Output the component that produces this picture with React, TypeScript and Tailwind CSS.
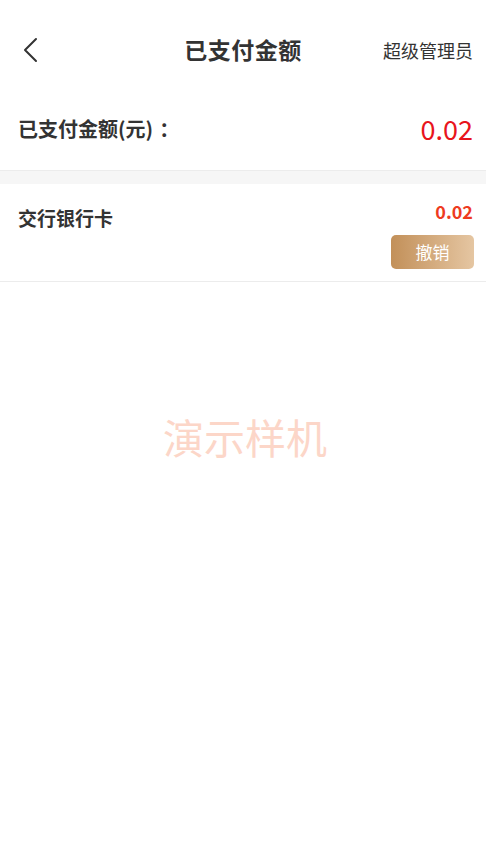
import React from "react";

const font = { fontFamily: '"Noto Sans CJK SC", "Noto Sans", sans-serif' };

export default function App() {
  return (
    <div className="min-h-[861px] w-[486px] bg-white text-[#333]" style={font}>
      {/* header */}
      <div className="relative flex h-[100px] items-start justify-center pt-[35px]">
        <button className="absolute left-[21px] top-[36px] p-0">
          <svg width="18" height="28" viewBox="0 0 18 28" fill="none">
            <path d="M15 3 L4 14 L15 25" stroke="#333" strokeWidth="2" strokeLinecap="round" strokeLinejoin="round" />
          </svg>
        </button>
        <h1 className="text-[23px] font-bold leading-[28px] tracking-[0.5px]">已支付金额</h1>
        <span className="absolute right-[13px] top-[37px] text-[18px] leading-[26px]">超级管理员</span>
      </div>

      {/* total */}
      <div className="flex h-[70px] items-start justify-between pl-[18px] pr-[13px] pt-[13px]">
        <span className="text-[20px] font-bold leading-[32px]">
          已支付金额(元)<span className="ml-[6px]">：</span>
        </span>
        <span className="text-[27px] leading-[32px] text-[#e8141c]">0.02</span>
      </div>

      <div className="h-[14px] border-t border-[#ececec] bg-[#f6f6f6]" />

      {/* payment row */}
      <div className="flex justify-between border-b border-[#ececec] pl-[18px] pr-[12px] pt-[17px] pb-[12px]">
        <span className="pt-[4px] text-[19px] font-bold leading-[26px]">交行银行卡</span>
        <div className="flex flex-col items-end">
          <span className="pr-px text-[18px] font-bold leading-[20px] text-[#ee3b1f]">0.02</span>
          <button className="mt-[14px] flex h-[34px] w-[83px] items-center justify-center rounded-[5px] bg-gradient-to-r from-[#c29059] to-[#e5c6a2] text-[17px] text-white">
            撤销
          </button>
        </div>
      </div>

      {/* watermark */}
      <div className="flex justify-center pt-[134px] pl-[4px]">
        <span className="text-[41px] leading-none text-[#fcd6c8]">演示样机</span>
      </div>
    </div>
  );
}
